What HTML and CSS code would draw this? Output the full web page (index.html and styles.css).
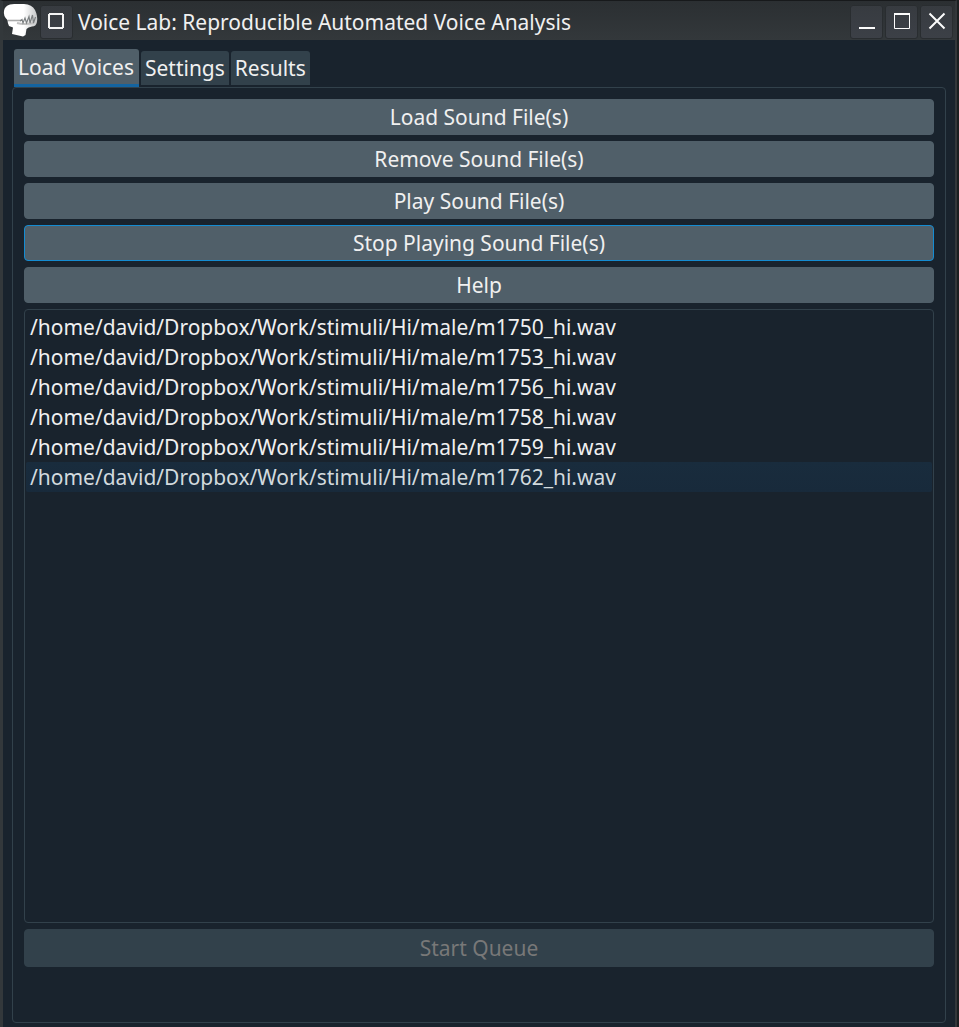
FILE: index.html
```
<!DOCTYPE html>
<html lang="en">
<head>
<meta charset="utf-8">
<title>Voice Lab</title>
<link rel="stylesheet" href="styles.css">
</head>
<body>
<div class="window">
  <header class="titlebar">
    <svg class="logo" width="36" height="36" viewBox="0 0 36 36">
      <defs>
        <filter id="soft" x="-20%" y="-40%" width="140%" height="180%"><feGaussianBlur stdDeviation="0.4"/></filter>
        <filter id="edge"><feGaussianBlur stdDeviation="0.4"/></filter>
        <linearGradient id="head"><stop offset=".6" stop-color="#fff"/><stop offset="1" stop-color="#c4c6c7"/></linearGradient>
      </defs>
      <path d="M1 7 Q1.500 2 7 .5 Q13 -.5 21 0 Q29 .5 32 6 Q35 12 34 18 Q33 22.500 29 22.500 Q25 23 23.500 25 L22.500 31 L20 32.500 L9 30 L10 23.500 L6 22 Q4.500 19 4.500 16 Q0 12 1 7 Z" fill="url(#head)" filter="url(#edge)"/>
      <g filter="url(#soft)" fill="none">
        <path d="M5 16.500 H18" stroke="#aaa" stroke-width="1.600"/>
        <path d="M14 19 Q21 21 31 19" stroke="#c0c0c0" stroke-width="2"/>
        <path d="M17 17 L19 15.500 L20 19 L22 14 L23.500 19 L26 12.500 L27 19 L29.500 11 L30.500 19 L32.500 13" stroke="#7c8082" stroke-width="1.200"/>
      </g>
    </svg>
    <span class="tool menu-tool"><svg width="33" height="34" viewBox="0 0 33 34"><path d="M9 9H23M9 23H23M9 9V23M23 9V23" fill="none" stroke="#f4f4f4" stroke-width="2"/></svg></span>
    <h1 class="title">Voice Lab: Reproducible Automated Voice Analysis</h1>
    <div class="controls">
      <span class="tool"><svg width="33" height="34" viewBox="0 0 33 34"><path d="M9 23H25" stroke="#fcfcfc" stroke-width="2"/></svg></span>
      <span class="tool"><svg width="33" height="34" viewBox="0 0 33 34"><path d="M9.500 9V23.500H24.500V9" fill="none" stroke="#fcfcfc"/><path d="M9 9H25" stroke="#fcfcfc" stroke-width="2"/></svg></span>
      <span class="tool"><svg width="33" height="34" viewBox="0 0 33 34"><path d="M9.500 8.500L24.500 23.500M24.500 8.500L9.500 23.500" stroke="#fcfcfc" stroke-width="2"/></svg></span>
    </div>
  </header>
  <main class="content">
    <nav class="tabs">
      <span class="tab active">Load Voices</span>
      <span class="tab">Settings</span>
      <span class="tab">Results</span>
    </nav>
    <section class="panel">
      <button class="btn">Load Sound File(s)</button>
      <button class="btn">Remove Sound File(s)</button>
      <button class="btn">Play Sound File(s)</button>
      <button class="btn focused">Stop Playing Sound File(s)</button>
      <button class="btn">Help</button>
      <ul class="files">
        <li>/home/david/Dropbox/Work/stimuli/Hi/male/m1750_hi.wav</li>
        <li>/home/david/Dropbox/Work/stimuli/Hi/male/m1753_hi.wav</li>
        <li>/home/david/Dropbox/Work/stimuli/Hi/male/m1756_hi.wav</li>
        <li>/home/david/Dropbox/Work/stimuli/Hi/male/m1758_hi.wav</li>
        <li>/home/david/Dropbox/Work/stimuli/Hi/male/m1759_hi.wav</li>
        <li class="selected">/home/david/Dropbox/Work/stimuli/Hi/male/m1762_hi.wav</li>
      </ul>
      <button class="btn start" disabled>Start Queue</button>
    </section>
  </main>
</div>
</body>
</html>
```
FILE: styles.css
```
* { box-sizing: border-box; }
body {
  margin: 0;
  background: #1b1e20;
  font: 20.980px/30px "Noto Sans", sans-serif;
  color: #f0f0f0;
}
.window {
  width: 957px;
  height: 1027px;
  border-top: 1px solid #17191b;
  border-left: 3px solid #33383b;
  border-right: 2px solid #33373a;
  background: #19232d;
  display: flex;
  flex-direction: column;
}
.titlebar {
  height: 39px;
  flex: none;
  display: flex;
  align-items: center;
  background: linear-gradient(#2b2f32, #33383b);
  padding-top: 3px;
}
.logo { margin-right: 1px; flex: none; }
.tool {
  width: 33px;
  height: 34px;
  border-radius: 3px;
  background: linear-gradient(#373b40, #3c4047);
  box-shadow: inset 0 0 0 1px #292d30;
  display: block;
}
.tool svg { display: block; }
.menu-tool { flex: none; }
.title {
  margin: 0 0 0 5px;
  font-size: 20.980px;
  font-weight: 400;
  white-space: nowrap;
}
.controls { display: flex; gap: 2px; margin-left: auto; margin-right: 2px; }
.content {
  flex: 1;
  display: flex;
  flex-direction: column;
  padding: 9px 9px 4px 9px;
}
.tabs {
  display: flex;
  gap: 2px;
  height: 38px;
  padding-left: 2px;
  flex: none;
}
.tab {
  background: #32414b;
  height: 34px;
  margin-top: 2px;
  padding: 2px 4px;
  border-radius: 3px 3px 0 0;
  white-space: nowrap;
}
.tab.active {
  background: #505f69;
  width: 125px;
  height: 38px;
  margin-top: 0;
  padding: 3px 4px 0;
  border-bottom: 3px solid #1464a0;
}
.panel {
  flex: 1;
  border: 1px solid #32414b;
  border-radius: 4px;
  padding: 11px;
  display: flex;
  flex-direction: column;
  gap: 6px;
}
.btn {
  height: 36px;
  flex: none;
  border: 1px solid #505f69;
  border-radius: 4px;
  background: #505f69;
  color: #f0f0f0;
  font: inherit;
  padding: 0;
}
.btn.focused { border-color: #148cd2; }
.btn.start { height: 38px; background: #32414b; border-color: #32414b; color: #787878; }
.files {
  list-style: none;
  margin: 0;
  height: 614px;
  border: 1px solid #32414b;
  border-radius: 4px;
  padding: 2px 1px;
}
.files li { height: 30px; padding-left: 4px; }
.files .selected { background: linear-gradient(#192c3d, #182a3b); color: #d2dade; border-radius: 2px; }
```
